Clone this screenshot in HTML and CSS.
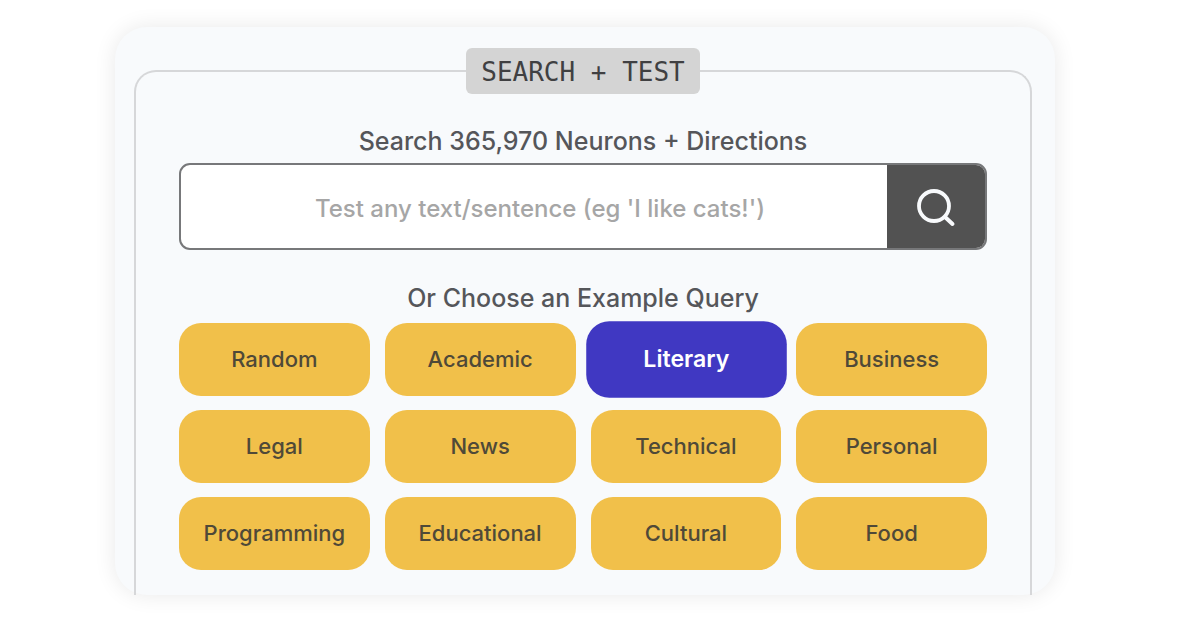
FILE: index.html
```html
<!DOCTYPE html>
<html lang="en">
<head>
<meta charset="utf-8">
<title>Search + Test</title>
<link rel="stylesheet" href="styles.css">
</head>
<body>
<main class="card">
  <fieldset class="panel">
    <legend class="panel-title">SEARCH + TEST</legend>
    <form class="search">
      <label class="heading" for="query">Search 365,970 Neurons + Directions</label>
      <div class="search-bar">
        <input class="search-input" id="query" type="text" placeholder="Test any text/sentence (eg 'I like cats!')">
        <button class="search-button" type="submit" aria-label="Search">
          <svg class="search-icon" viewBox="0 0 40 40" fill="none" stroke="currentColor" stroke-linecap="round" aria-hidden="true">
            <circle cx="18" cy="18" r="15" stroke-width="3.8"/>
            <path d="M29 29L36.5 36" stroke-width="4"/>
          </svg>
        </button>
      </div>
    </form>
    <h2 class="heading">Or Choose an Example Query</h2>
    <div class="examples">
      <button class="example" type="button">Random</button>
      <button class="example" type="button">Academic</button>
      <button class="example example-active" type="button">Literary</button>
      <button class="example" type="button">Business</button>
      <button class="example" type="button">Legal</button>
      <button class="example" type="button">News</button>
      <button class="example" type="button">Technical</button>
      <button class="example" type="button">Personal</button>
      <button class="example" type="button">Programming</button>
      <button class="example" type="button">Educational</button>
      <button class="example" type="button">Cultural</button>
      <button class="example" type="button">Food</button>
    </div>
  </fieldset>
</main>
</body>
</html>
```
FILE: styles.css
```css
* {
  box-sizing: border-box;
}

body {
  margin: 0;
  padding: 27px 123px 30px 115px;
  background: #fff;
  color: #55565a;
  font-family: Inter, "Liberation Sans", sans-serif;
}

.card {
  padding: 21px 23px 0 19px;
  border-radius: 32px;
  background: #f8fafc;
  box-shadow: 0 0 22px rgba(0, 0, 0, 0.09);
}

.panel {
  margin: 0;
  min-width: 0;
  padding: 30px 43px 25px;
  border: 2px solid #d6d7d9;
  border-bottom: 0;
  border-radius: 22px 22px 0 0;
}

.panel-title {
  margin: 0 auto;
  padding: 2px 15px 0;
  border-radius: 6px;
  background: #d4d4d4;
  color: #404042;
  font: 26px/44px "DejaVu Sans Mono", monospace;
}

.heading {
  display: block;
  margin: 0 0 5px;
  font-size: 25px;
  font-weight: 500;
  line-height: 34px;
  text-align: center;
}

h2.heading {
  margin-bottom: 8px;
}

.search {
  margin: 0 0 31px;
}

.search-bar {
  display: flex;
  height: 87px;
  overflow: hidden;
  border: 2px solid #77787a;
  border-radius: 11px;
  background: #fff;
}

.search-input {
  flex: 1;
  min-width: 0;
  padding: 4px 12px 0 24px;
  border: 0;
  outline: 0;
  background: transparent;
  color: #525252;
  font: 500 24px/32px Inter, "Liberation Sans", sans-serif;
  text-align: center;
}

.search-input::placeholder {
  color: #a6a6a6;
  opacity: 1;
}

.search-button {
  display: flex;
  align-items: center;
  justify-content: center;
  width: 98px;
  padding: 2px 0 0;
  border: 0;
  background: #525252;
  color: #f8fafc;
}

.search-icon {
  width: 40px;
  height: 40px;
}

.examples {
  display: grid;
  grid-template-columns: repeat(4, 1fr);
  gap: 14px 15px;
}

.example {
  min-width: 0;
  height: 73px;
  padding: 0 0 2px;
  border: 0;
  border-radius: 22px;
  background: #f1c04a;
  color: #4f4938;
  font: 500 22px/30px Inter, "Liberation Sans", sans-serif;
}

.example-active {
  background: #4038c2;
  color: #fff;
  font-weight: 600;
  transform: scale(1.05);
}
```
